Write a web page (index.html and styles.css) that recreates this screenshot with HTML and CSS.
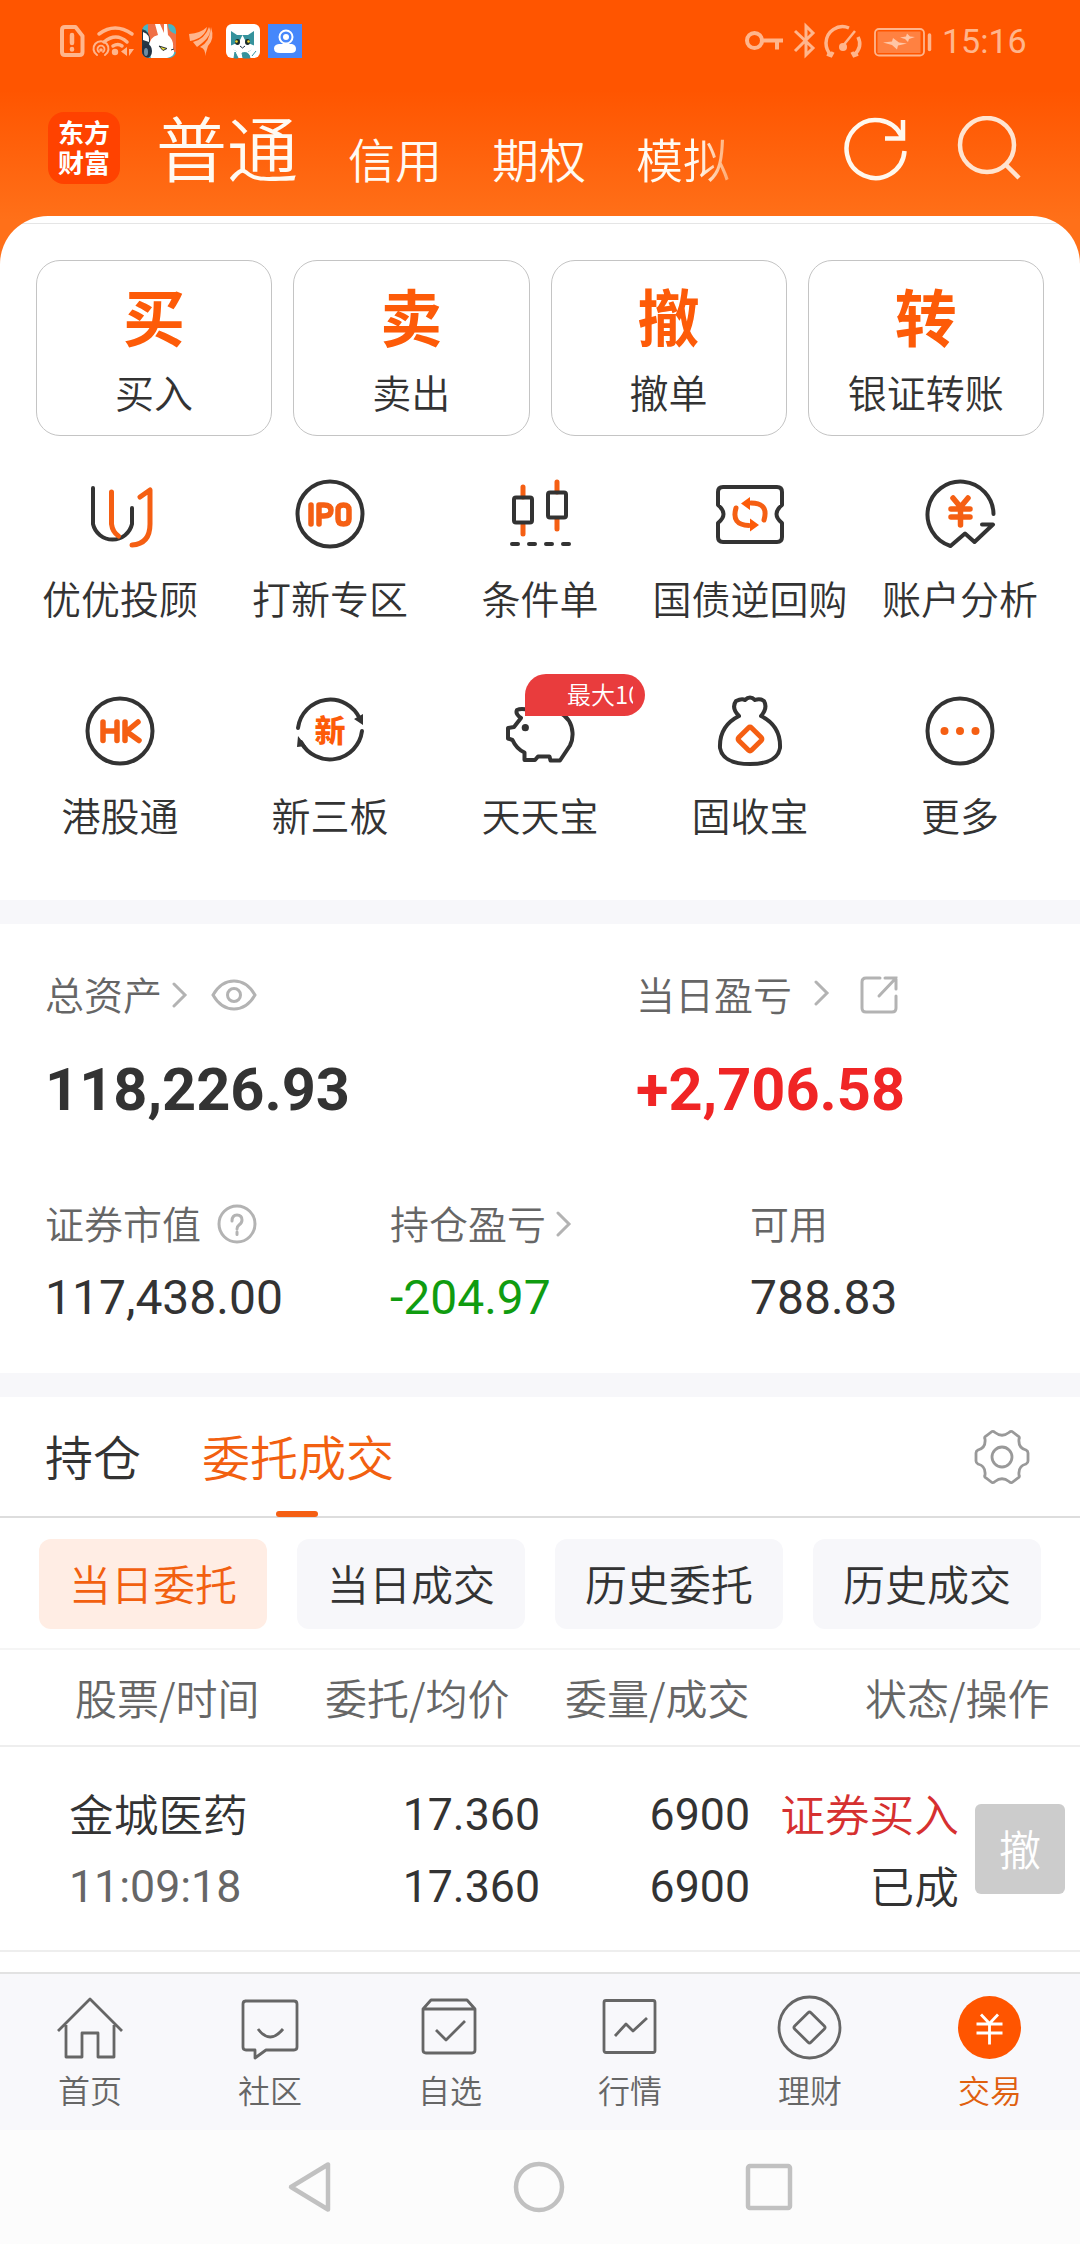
FILE: index.html
```html
<!DOCTYPE html>
<html lang="zh-CN">
<head>
<meta charset="utf-8">
<title>普通交易</title>
<link rel="stylesheet" href="styles.css">
</head>
<body>
<div class="screen">
  <header class="top">
    <div class="status">
      <svg class="status-left" width="320" height="84" viewBox="0 0 320 84">
        <g fill="none" stroke="#ffb58c" stroke-width="4" stroke-linejoin="round" stroke-linecap="round">
          <path d="M65 27h10.500l7 9v16q0 3-3 3h-14.500q-3 0-3-3v-22q0-3 3-3z"/>
          <path d="M72 35v8M72 49v.5" stroke-width="4.500"/>
          <path d="M99 34q16-12 33 0M104 42q12-10 23 0M113 46q5-3 9 0" stroke-width="3.500"/>
          <path d="M97 55a7.500 7.500 0 1 1 8 0" stroke-width="2"/>
          <path d="M99 52a3.500 3.500 0 1 1 4 0" stroke-width="1.800"/>
        </g>
        <g fill="#ffb58c"><circle cx="101" cy="50" r="1.800"/><circle cx="115" cy="52" r="3.200"/><path d="M127 47v9l-6-4.500zM129 49v7l5-7z"/></g>
        <clipPath id="app"><rect x="142" y="24" width="34" height="34" rx="7"/></clipPath>
        <g clip-path="url(#app)">
          <path d="M142 24h34v34h-34z" fill="#48b4c4"/>
          <path d="M148 24h20q0 8 8 10v18h-20l-8-12z" fill="#f07046"/>
          <path d="M142 29q8 2 8 12l-4 17h-4z" fill="#263845"/>
          <path d="M143 32q7 2 6 10l-6-2z" fill="#fff"/>
          <path d="M151 58q-6-20 7-23l-3-11h5l4 9 0-9h3l1 11q6 5 5 13 4 8-6 10z" fill="#fff"/>
          <ellipse cx="147" cy="51" rx="5" ry="7" fill="#223345"/><ellipse cx="146" cy="52" rx="2" ry="4" fill="#6f8ca0"/>
          <path d="M159 46l8 2.500-4 2z" fill="#e7dc30" stroke="#29333b"/><path d="M171 50l3-1" stroke="#29333b"/>
        </g>
        <path d="M189 34q12-1 18-7-2 11-17 14zM193 42q12-3 16-15 5 8-12 20zM200 47q10-5 11-20 4 12-3 19l-3 10q1-7-5-9z" fill="#ffb58c"/>
        <rect x="226" y="24" width="34" height="34" rx="6" fill="#fff"/>
        <path d="M231 31l6 4h11l6-4v14q-2 6-7 7H238q-6-2-7-7z" fill="#35929c"/>
        <path d="M230 46l9-4 3.500-7 3.500 7 9 4q-3 6-12 6-10 0-13-6zM237 51h11v7h-14z" fill="#fff"/>
        <path d="M235 52l3 6h-4zM242 53q7-2 8 5h-7zM252 56l4-5" fill="#35929c" stroke="#35929c"/>
        <ellipse cx="237.500" cy="42" rx="2.500" ry="3" fill="#1b2b2b"/><ellipse cx="247.500" cy="42" rx="2.500" ry="3" fill="#1b2b2b"/>
        <circle cx="236.500" cy="41.500" r="1.300" fill="#f4dc39"/><circle cx="248.500" cy="41.500" r="1.300" fill="#f4dc39"/>
        <path d="M240 46l2.500 2 2.500-2" fill="none" stroke="#234"/>
        <rect x="268" y="24" width="34" height="34" fill="#4687fb"/>
        <path d="M279 44h13q4 1 4 5 0 4-5 4h-11q-6 0-6-4.500 0-4 5-4.500z" fill="#fff"/>
        <circle cx="286" cy="37" r="6.500" fill="#4687fb" stroke="#fff" stroke-width="2"/><circle cx="286" cy="37" r="3" fill="#fff"/>
      </svg>
      <div class="status-right">
        <svg width="192" height="84" viewBox="744 0 192 84" fill="none" stroke="#ffb58c" stroke-width="4">
          <circle cx="754.500" cy="40.500" r="7.500"/><path d="M762 40.500h21M777 40.500v9"/>
          <path d="M795 31l18 17-7 7V26l7 7-18 18" stroke-width="3"/>
          <path d="M849 28A16.500 16.500 0 0 0 826 43q0 7 5 12m2-3l-2 3.500-4-1.500M858 37q5 10-4 18m-2-3l2 3.500 4-1.500" stroke-width="3.500"/>
          <circle cx="843" cy="47" r="4" fill="#ffb58c" stroke="none"/><path d="M842 47l13-16" stroke-width="2.500"/>
          <rect x="875" y="29" width="49" height="26.500" rx="4" stroke-width="1.800"/><rect x="877.500" y="31.500" width="43" height="21.500" fill="#ff8141" stroke="none"/>
          <path d="M883 42.500l9-1 1-3.500 6 4.500 8 1-9 2-1 4-5-4.500z" fill="#ffc6a6" stroke="none"/><path d="M900 37.500l6-1 1-3 3 3 5 .5-6 2-1 3-3-3z" fill="#ffc6a6" stroke="none"/>
          <path d="M929.500 35v14.500" stroke-linecap="round" stroke-width="3.500"/>
        </svg>
        <span class="clock">15:16</span>
      </div>
    </div>
    <nav class="accounts">
      <div class="logo"><span>东方</span><span>财富</span></div>
      <div class="account account-active">普通</div>
      <div class="account">信用</div>
      <div class="account">期权</div>
      <div class="account account-fade">模拟</div>
      <svg class="refresh" width="66" height="66" viewBox="843 116 66 66" fill="none" stroke="#fff8ee" stroke-width="4.500"><path d="M904.500 151a29 29 0 1 1-3-15M903 120v18.500h-18"/></svg>
      <svg class="search" width="66" height="66" viewBox="956 116 66 66" fill="none" stroke="#ffe4d0" stroke-width="4.500"><circle cx="987" cy="145" r="27"/><path d="M1005 164l14 14"/></svg>
    </nav>
  </header>

  <main class="sheet">
    <section class="primary">
      <div class="card"><b>买</b><span>买入</span></div>
      <div class="card"><b>卖</b><span>卖出</span></div>
      <div class="card"><b>撤</b><span>撤单</span></div>
      <div class="card"><b>转</b><span>银证转账</span></div>
    </section>

    <section class="tools">
      <div class="tool">
        <svg class="tool-icon" viewBox="0 0 76 76"><path class="ink" d="M11 12v36a20 20 0 0 0 39 0V32"/><path class="hot" d="M29.500 16v32q1 8 7 12M58 21l10-7v34q0 20-18 21"/></svg>
        <span>优优投顾</span>
      </div>
      <div class="tool">
        <svg class="tool-icon" viewBox="0 0 76 76"><circle class="ink" cx="38" cy="38" r="32.500"/><path class="hot thick" d="M19 29v19M27 48V29h5q7 0 7 5.500T32 40h-5M46 34q0-5 5.500-5t5.500 5v9q0 5-5.500 5t-5.500-5z"/></svg>
        <span>打新专区</span>
      </div>
      <div class="tool">
        <svg class="tool-icon" viewBox="0 0 76 76"><path class="hot" d="M21 11v10M21 49v9M55 6v10M55 43v10"/><rect class="ink" x="12" y="21.500" width="18" height="25" rx="2"/><rect class="ink" x="46" y="16.500" width="18" height="25" rx="2"/><path class="ink" d="M10 68h6M27 68h6M44 68h6M61 68h6"/></svg>
        <span>条件单</span>
      </div>
      <div class="tool">
        <svg class="tool-icon" viewBox="0 0 76 76"><path class="ink" d="M11 11h54q5 0 5 5v13q-11 9 0 18v14q0 5-5 5H11q-5 0-5-5V47q11-9 0-18V16q0-5 5-5z"/><path class="hot" d="M24 32q-5 17 13 17.500M52 44q5-17-13-17"/><path d="M29 27.500l9-6.500v13zM47 49l-9 6.500v-13z" fill="#fd5b08"/></svg>
        <span>国债逆回购</span>
      </div>
      <div class="tool">
        <svg class="tool-icon" viewBox="0 0 76 76"><path class="ink" d="M71.500 38a33 33 0 1 0-43 32L43 57.500l9.500 8.500L71 48.500H60"/><path class="hot thick" d="M31 22l7.500 9 7.500-9M38.500 31v18M29 33h19M29 41h19"/></svg>
        <span>账户分析</span>
      </div>
      <div class="tool">
        <svg class="tool-icon" viewBox="0 0 76 76"><circle class="ink" cx="38" cy="38" r="32.500"/><path class="hot thick" d="M21 29v18.500M35 29v18.500M21 38h14M43 29v18.500M56 29l-11.500 9.500L57 47.500"/></svg>
        <span>港股通</span>
      </div>
      <div class="tool">
        <svg class="tool-icon" viewBox="0 0 76 76"><path class="ink" d="M6 35a32.500 32.500 0 0 1 62-9M70 38a32.500 32.500 0 0 1-61 11"/><path d="M71 21v11l-9-6zM6 43l8 10-9 1z" fill="#333"/><text class="glyph" x="38" y="49">新</text></svg>
        <span>新三板</span>
      </div>
      <div class="tool">
        <svg class="tool-icon" viewBox="0 0 76 76"><path class="ink" d="M27 17q-8-2-12 0-2 4 4 8l-7 9-6 1v10.500l4.500 1.500q4 9 12 12.500V67H33l3-3.500h11.500l1 4H58l10-15q3-6 2.500-13-1-14-13-20-15-6-30.500-2.500z"/><circle cx="23.300" cy="34.700" r="3.600" fill="#333"/></svg>
        <span>天天宝</span>
        <div class="badge"><div class="badge-text">最大10万</div></div>
      </div>
      <div class="tool">
        <svg class="tool-icon" viewBox="0 0 76 76"><path class="ink" d="M27 23q-8-8-3-15 6-3 9-1 5-5 10 0 5-2 9 1 4 7-3 15 20 10 19 32-3 16-30 16T8 55q-1-22 19-32z"/><rect class="hot square" x="29" y="37" width="18" height="18" rx="2" transform="rotate(45 38 46)"/></svg>
        <span>固收宝</span>
      </div>
      <div class="tool">
        <svg class="tool-icon" viewBox="0 0 76 76"><circle class="ink" cx="38" cy="38" r="32.500"/><g fill="#f55f13"><circle cx="22.500" cy="38" r="4"/><circle cx="38" cy="38" r="4"/><circle cx="53.500" cy="38" r="4"/></g></svg>
        <span>更多</span>
      </div>
    </section>

    <section class="assets">
      <div class="totals">
        <div class="total">
          <div class="caption">总资产<svg class="chev" viewBox="0 0 16 26"><path d="M2 2l11 11L2 24"/></svg>
            <svg class="eye" width="46" height="34" viewBox="0 0 46 34"><path d="M2 17q8-14 21-14t21 14q-8 14-21 14T2 17z"/><circle cx="23" cy="17" r="6.500"/></svg></div>
          <div class="big">118,226.93</div>
        </div>
        <div class="total">
          <div class="caption">当日盈亏<svg class="chev chev-wide" viewBox="0 0 16 26"><path d="M2 2l11 11L2 24"/></svg>
            <svg class="share" width="40" height="40" viewBox="0 0 40 40"><path d="M21 3H7q-4 0-4 4v26q0 4 4 4h26q4 0 4-4V21M26 3h11v11M37 3L20 21"/></svg></div>
          <div class="big rise">+2,706.58</div>
        </div>
      </div>
      <div class="details">
        <div class="detail">
          <div class="caption">证券市值<svg class="help" width="40" height="40" viewBox="0 0 40 40"><circle cx="20" cy="20" r="18"/><path d="M15 17q0-6 5-6t5 5q0 3-3 5-2 1.500-2 4M20 28v2.500"/></svg></div>
          <div class="mid">117,438.00</div>
        </div>
        <div class="detail">
          <div class="caption">持仓盈亏<svg class="chev" viewBox="0 0 16 26"><path d="M2 2l11 11L2 24"/></svg></div>
          <div class="mid fall">-204.97</div>
        </div>
        <div class="detail">
          <div class="caption">可用</div>
          <div class="mid">788.83</div>
        </div>
      </div>
    </section>

    <section class="orders">
      <div class="tabs">
        <div class="tab">持仓</div>
        <div class="tab tab-active">委托成交</div>
        <svg class="gear" width="60" height="60" viewBox="-30 -30 60 60"><path d="M-10-25.500Q-8-26-7-24.500 0-19 7-24.500 8-26 10-25.500L16-21Q18-20 17-18 16-9 24-7 26-6 26-4V4Q26 6 24 7 16 9 17 18 18 20 16 21L10 25.500Q8 26 7 24.500 0 19-7 24.500-8 26-10 25.500L-16 21Q-18 20-17 18-16 9-24 7-26 6-26 4V-4Q-26-6-24-7-16-9-17-18-18-20-16-21z"/><circle r="10"/></svg>
      </div>
      <div class="chips">
        <div class="chip chip-active">当日委托</div>
        <div class="chip">当日成交</div>
        <div class="chip">历史委托</div>
        <div class="chip">历史成交</div>
      </div>
      <div class="grid-head">
        <span>股票/时间</span><span>委托/均价</span><span>委量/成交</span><span>状态/操作</span>
      </div>
      <div class="row">
        <div class="cell name"><span>金城医药</span><span class="num time">11:09:18</span></div>
        <div class="cell"><span class="num">17.360</span><span class="num">17.360</span></div>
        <div class="cell"><span class="num">6900</span><span class="num">6900</span></div>
        <div class="cell"><span class="side">证券买入</span><span>已成</span></div>
        <div class="cancel">撤</div>
      </div>
    </section>
  </main>

  <nav class="tabbar">
    <div class="item"><svg class="item-icon" viewBox="0 0 70 70"><path d="M3 40l32-32 32 32M11 34v32h16V42h16v24h16V34"/></svg><span>首页</span></div>
    <div class="item"><svg class="item-icon" viewBox="0 0 70 70"><path d="M10 10h49q3 0 3 3v43q0 3-3 3H31l-11 8v-8H11q-3 0-3-3V13q0-3 3-3M23 38q12 16 25 0"/></svg><span>社区</span></div>
    <div class="item"><svg class="item-icon" viewBox="0 0 70 70"><path d="M8 18h52v41q0 3-3 3H11q-3 0-3-3V18l8-9h36l8 9M21 39l10 10 19-19"/></svg><span>自选</span></div>
    <div class="item"><svg class="item-icon" viewBox="0 0 70 70"><rect x="9" y="9.500" width="51" height="52" rx="2"/><path d="M20 45l11-12 7 7 14-13"/></svg><span>行情</span></div>
    <div class="item"><svg class="item-icon" viewBox="0 0 70 70"><circle cx="34.500" cy="36.500" r="30.500"/><rect x="23" y="25" width="23" height="23" rx="2" transform="rotate(45 34.500 36.500)"/></svg><span>理财</span></div>
    <div class="item item-active"><svg class="item-icon" viewBox="0 0 70 70"><circle cx="34.500" cy="36.500" r="31.500" fill="#ff5500" stroke="none"/><path d="M26 23.500l8.500 9 8.500-9M34.500 32.500v21M21.500 33h26M21.500 42h26" stroke="#fff"/></svg><span>交易</span></div>
  </nav>
  <footer class="system">
    <svg width="52" height="54" viewBox="0 0 52 54"><path d="M44 4.500v45L7 27z"/></svg>
    <svg width="54" height="54" viewBox="0 0 54 54"><circle cx="27" cy="27" r="23"/></svg>
    <svg width="54" height="54" viewBox="0 0 54 54"><rect x="6" y="6" width="42" height="42" rx="2"/></svg>
  </footer>
</div>
</body>
</html>
```

FILE: styles.css
```css
* { box-sizing: border-box; }
body {
  margin: 0;
  background: #fff;
  color: #333;
  font-family: "Noto Sans CJK SC", sans-serif;
  font-weight: 350;
}
svg { display: block; flex: none; }

.screen {
  width: 1080px;
  height: 2244px;
  overflow: hidden;
  display: flex;
  flex-direction: column;
}

/* header */
.top {
  height: 272px;
  flex: none;
  background: linear-gradient(#ff5500 90px, #ff7019 220px);
}
.status { display: flex; justify-content: space-between; height: 84px; }
.status-right { display: flex; width: 336px; }
.clock {
  margin-left: 6px;
  font: 400 34px/82px Roboto, sans-serif;
  color: #ffb58c;
}
.accounts { display: flex; height: 132px; padding-left: 48px; color: #fffaf2; }
.logo {
  width: 72px;
  height: 72px;
  margin-top: 28px;
  padding-top: 5px;
  border-radius: 16px;
  background: #ff4200;
  color: #fff;
  font-size: 26px;
  font-weight: 700;
  line-height: 30px;
  display: flex;
  flex-direction: column;
  align-items: center;
}
.account { width: 144px; font-size: 47px; line-height: 147px; white-space: nowrap; }
.account-active { width: 192px; margin-left: 36px; font-size: 71px; line-height: 122px; }
.account-fade {
  width: 208px;
  background: linear-gradient(90deg, #fffaf2 62px, #ffa060 96px);
  -webkit-background-clip: text;
  background-clip: text;
  color: transparent;
}
.refresh { margin-top: 32px; margin-left: -1px; }
.search { margin-top: 32px; margin-left: 47px; }

/* white sheet */
.sheet {
  flex: 1;
  margin-top: -56px;
  border-radius: 48px 48px 0 0;
  background: linear-gradient(#fff 7px, #e5e5e5 7px, #e5e5e5 8px, #fff 8px);
}
.primary {
  display: grid;
  grid-template-columns: repeat(4, 1fr);
  gap: 21px;
  padding: 44px 36px 0;
}
.card {
  height: 176px;
  border: 1px solid #c4c4c4;
  border-radius: 24px;
  display: flex;
  flex-direction: column;
  align-items: center;
}
.card b {
  margin-top: 14px;
  font-size: 62px;
  font-weight: 700;
  line-height: 80px;
  color: #fd5b08;
}
.card span { margin-top: 10px; font-size: 39px; line-height: 52px; }

.tools {
  display: grid;
  grid-template-columns: repeat(5, 210px);
  grid-auto-rows: 217px;
  padding: 40px 15px 0;
  height: 464px;
}
.tool {
  position: relative;
  display: flex;
  flex-direction: column;
  align-items: center;
}
.tool-icon { width: 76px; height: 76px; fill: none; }
.tool span { margin-top: 20px; font-size: 39px; line-height: 51px; white-space: nowrap; }
.ink { stroke: #333; stroke-width: 4; stroke-linecap: round; stroke-linejoin: round; }
.hot { stroke: #f55f13; stroke-width: 5; stroke-linecap: round; stroke-linejoin: round; }
.thick { stroke-width: 5.500; }
.glyph { font-size: 31px; font-weight: 900; text-anchor: middle; fill: #fd5b08; }
.badge {
  position: absolute;
  left: 90px;
  top: -19px;
  width: 120px;
  height: 42px;
  padding-left: 42px;
  border-radius: 21px 21px 21px 0;
  background: #e93c3d;
}
.badge-text {
  width: 66px;
  overflow: hidden;
  white-space: nowrap;
  font-size: 24px;
  line-height: 40px;
  color: #fff;
}

/* assets */
.assets { height: 497px; padding: 40px 45px 0; border-top: 24px solid #f7f7fa; border-bottom: 24px solid #f7f7fa; }
.totals { display: grid; grid-template-columns: 591px 1fr; }
.caption { display: flex; align-items: center; height: 58px; font-size: 39px; color: #666; }
.caption svg { fill: none; stroke: #b3b3b3; stroke-width: 3; stroke-linecap: round; }
.chev { width: 16px; height: 26px; margin-left: 10px; margin-top: 4px; }
.chev-wide { margin-left: 22px; margin-top: 0; }
.eye { margin-left: 23px; margin-top: 3px; }
.share { margin-left: 29px; margin-top: 4px; }
.help { margin-left: 16px; margin-top: 4px; }
.big { margin-top: 32px; font: 700 59.500px/72px Roboto, sans-serif; }
.rise { color: #f02525; }
.fall { color: #109c10; }
.details { display: grid; grid-template-columns: 345px 360px 1fr; margin-top: 67px; }
.mid { margin-top: 19px; font: 400 48px/56px Roboto, sans-serif; }

/* orders */
.tabs {
  display: flex;
  gap: 61px;
  height: 121px;
  padding-left: 45px;
  border-bottom: 2px solid #ddd;
  font-size: 48px;
  line-height: 116px;
}
.tab { height: 121px; position: relative; }
.tab-active { color: #f26010; }
.tab-active::after {
  content: "";
  position: absolute;
  left: 74px;
  bottom: 1px;
  width: 42px;
  height: 6px;
  border-radius: 3px;
  background: #f55f13;
}
.gear { margin: 30px 48px 0 auto; fill: none; stroke: #999; stroke-width: 2.800; }
.chips { display: flex; gap: 30px; height: 132px; padding: 21px 39px 0; border-bottom: 2px solid #f5f5f5; }
.chip {
  flex: 1;
  height: 90px;
  border-radius: 12px;
  background: #f7f7fa;
  text-align: center;
  font-size: 42px;
  line-height: 88px;
}
.chip-active { background: #ffede4; color: #f26010; }
.grid-head {
  display: grid;
  grid-template-columns: 250px 240px 300px 1fr;
  height: 97px;
  padding-left: 75px;
  border-bottom: 2px solid #eee;
  color: #666;
  font-size: 42px;
  line-height: 94px;
}
.row {
  display: grid;
  grid-template-columns: 250px 221px 210px 209px 90px;
  align-items: center;
  height: 205px;
  padding-left: 69px;
  border-bottom: 2px solid #eee;
  font-size: 44.700px;
}
.cell { display: flex; flex-direction: column; align-items: flex-end; line-height: 72px; }
.name { align-items: flex-start; }
.num { padding-top: 2px; margin-bottom: -2px; font-family: Roboto, sans-serif; font-weight: 400; }
.time { color: #666; }
.side { color: #d63030; }
.cancel {
  height: 90px;
  margin-left: 16px;
  width: 90px;
  border-radius: 6px;
  background: #ccc;
  color: #fff;
  text-align: center;
  font-size: 42px;
  line-height: 88px;
}

/* bottom bars */
.tabbar {
  display: grid;
  grid-template-columns: repeat(6, 1fr);
  height: 158px;
  flex: none;
  background: #f8f8fb;
  border-top: 2px solid #e2e2e2;
}
.item { display: flex; flex-direction: column; align-items: center; padding-top: 17px; font-size: 32px; line-height: 46px; color: #666; }
.item-icon { width: 70px; height: 70px; fill: none; stroke: #666; stroke-width: 2.800; stroke-linejoin: round; }
.item span { margin-top: 5px; }
.item-active { color: #e0600f; }
.system {
  display: flex;
  justify-content: center;
  gap: 176px;
  height: 114px;
  flex: none;
  padding: 30px 0 0;
  background: #fcfcfc;
}
.system svg { fill: none; stroke: #c1c1c1; stroke-width: 4.500; stroke-linejoin: round; }
```
